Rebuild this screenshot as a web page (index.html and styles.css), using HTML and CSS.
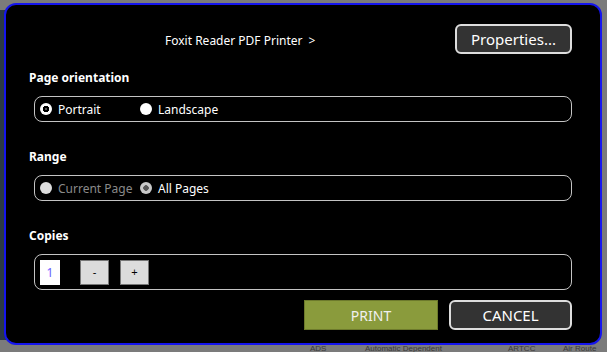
FILE: index.html
```html
<!DOCTYPE html>
<html lang="en">
<head>
<meta charset="UTF-8">
<meta name="viewport" content="width=device-width, initial-scale=1.0">
<title>Print</title>
<link rel="stylesheet" href="styles.css">
</head>
<body>

<div class="backdrop">
  <div class="side-strip"></div>
  <div class="back-text">
    <span class="bt-ads">ADS</span>
    <span class="bt-auto">Automatic Dependent</span>
    <span class="bt-artcc">ARTCC</span>
    <span class="bt-air">Air Route</span>
  </div>
</div>

<div class="dialog">
  <div class="header">
    <span class="printer-name">Foxit Reader PDF Printer <span class="chevron">&gt;</span></span>
    <button class="btn-dark btn-properties">Properties...</button>
  </div>

  <div class="section-label">Page orientation</div>
  <div class="group">
    <label class="radio"><span class="dot dot-checked"></span>Portrait</label>
    <label class="radio radio-second"><span class="dot"></span>Landscape</label>
  </div>

  <div class="section-label">Range</div>
  <div class="group">
    <label class="radio radio-disabled"><span class="dot dot-disabled"></span>Current Page</label>
    <label class="radio radio-second"><span class="dot dot-checked-gray"></span>All Pages</label>
  </div>

  <div class="section-label">Copies</div>
  <div class="group group-copies">
    <div class="copies-box">1</div>
    <button class="step-btn step-minus">-</button>
    <button class="step-btn">+</button>
  </div>

  <div class="footer">
    <button class="btn-print">PRINT</button>
    <button class="btn-dark btn-cancel">CANCEL</button>
  </div>
</div>

</body>
</html>
```

FILE: styles.css
```css
body {
  margin: 0;
  padding: 3px 0 0 4px;
  width: 607px;
  height: 352px;
  box-sizing: border-box;
  background-color: #7b7b7b;
  font-family: "Noto Sans", "Open Sans", sans-serif;
  overflow: hidden;
  position: relative;
}

.backdrop {
  position: absolute;
  left: 0;
  top: 0;
  width: 607px;
  height: 352px;
}

.side-strip {
  position: absolute;
  left: 0;
  top: 10px;
  width: 6px;
  height: 330px;
  background-color: #2c3a44;
}

.back-text {
  position: absolute;
  top: 345px;
  left: 0;
  font-family: "Liberation Sans", Arial, sans-serif;
  font-size: 8px;
  line-height: 7px;
  color: #3a3a3a;
}

.back-text span {
  position: absolute;
  white-space: nowrap;
}

.bt-ads { left: 310px; }
.bt-auto { left: 365px; }
.bt-artcc { left: 508px; }
.bt-air { left: 563px; }

.dialog {
  position: relative;
  width: 598px;
  height: 342px;
  box-sizing: border-box;
  background-color: #000;
  border: 2px solid #1515ee;
  border-radius: 12px;
  padding: 19px 28px 0 23px;
  color: #fff;
}

.header {
  display: flex;
  align-items: center;
  height: 30px;
}

.printer-name {
  margin-left: 136px;
  font-size: 12px;
  margin-top: 3px;
}

.chevron {
  margin-left: 3px;
}

.btn-dark {
  background-color: #333;
  color: #fff;
  border: 2px solid #ddd;
  border-radius: 6px;
  font-family: inherit;
  cursor: pointer;
}

.btn-properties {
  margin-left: auto;
  width: 117px;
  height: 30px;
  font-size: 15px;
  padding: 0;
}

.section-label {
  font-weight: bold;
  font-size: 12px;
  line-height: 16px;
  margin: 16px 0 10px;
}

.group {
  margin: 0 0 27px 5px;
  height: 26px;
  box-sizing: border-box;
  border: 1.5px solid #c4c4c4;
  border-radius: 8px;
  display: flex;
  align-items: center;
  padding-left: 5px;
  font-size: 12px;
}

.radio {
  display: flex;
  align-items: center;
  width: 100px;
}

.radio-second {
  width: auto;
}

.dot {
  width: 12px;
  height: 12px;
  border-radius: 50%;
  background-color: #fff;
  margin-right: 6px;
  box-sizing: border-box;
}

.dot-checked {
  background: radial-gradient(circle, #555 0 1px, #000 1.5px 3px, #fff 3.5px);
}

.dot-checked-gray {
  background: radial-gradient(circle, #555 0 2.5px, #c8c8c8 3px);
}

.dot-disabled {
  background-color: #ddd;
}

.radio-disabled {
  color: #8a8a8a;
}

.group-copies {
  height: 36px;
  margin-bottom: 0;
  padding-left: 5px;
}

.copies-box {
  width: 20px;
  height: 25px;
  background-color: #fff;
  color: #6a5cff;
  font-size: 12px;
  display: flex;
  align-items: center;
  justify-content: center;
}

.step-btn {
  width: 29px;
  height: 25px;
  margin-left: 11px;
  padding: 0;
  background-color: #dcdcdc;
  border: 1px solid #777;
  color: #000;
  font-family: "Liberation Sans", Arial, sans-serif;
  font-size: 11px;
}

.step-minus {
  margin-left: 20px;
}

.footer {
  display: flex;
  justify-content: flex-end;
  margin-top: 10px;
  gap: 11px;
}

.btn-print {
  width: 134px;
  height: 30px;
  background-color: #8a9b3c;
  border: 1px solid #6d7a2c;
  color: #f0f0f0;
  font-family: inherit;
  font-size: 14px;
  padding: 0;
}

.btn-cancel {
  width: 123px;
  height: 30px;
  font-size: 15px;
  padding: 0;
}
```
